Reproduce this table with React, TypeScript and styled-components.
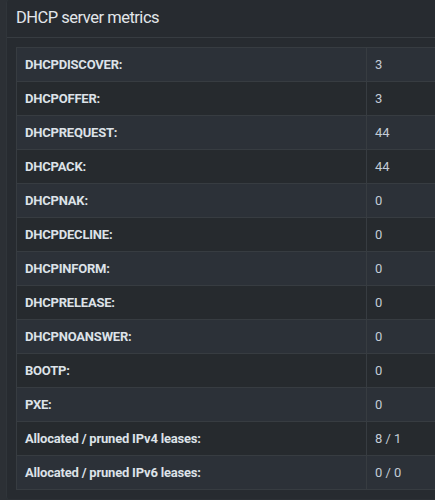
import React from "react";
import styled, { createGlobalStyle } from "styled-components";

const Global = createGlobalStyle`
  html, body {
    margin: 0;
    padding: 0;
    background: #2c3035;
    overflow: hidden;
  }
  body {
    font-family: Roboto, "Liberation Sans", sans-serif;
  }
`;

const Page = styled.div`
  padding: 0 0 0 6px;
  width: 480px;
`;

const Card = styled.section`
  background: #272b30;
  border-radius: 3px 0 0 3px;
  border-left: 1px solid #30353a;
`;

const Header = styled.header`
  height: 37px;
  display: flex;
  align-items: center;
  padding: 0 9px;
  border-bottom: 1px solid #373c41;
  box-sizing: content-box;
`;

const Title = styled.h3`
  margin: 0;
  font-family: Roboto, sans-serif;
  font-weight: 400;
  font-size: 16.5px;
  color: #e2e6ea;
  letter-spacing: -0.5px;
  transform: translateY(-1px);
`;

const Body = styled.div`
  padding: 9px 0 9px 9px;
`;

const Table = styled.table`
  border-collapse: collapse;
  width: 100%;
  border: 1px solid #373c41;
`;

const Row = styled.tr<{ $odd: boolean }>`
  background: ${(p) => (p.$odd ? "#2c3138" : "#262a2e")};
  height: 34px;
`;

const Label = styled.td`
  width: 333px;
  padding: 0 8px;
  border: 1px solid #373c41;
  font-family: Roboto, sans-serif;
  font-weight: 700;
  font-size: 13px;
  color: #dde2e8;
  letter-spacing: -0.2px;
`;

const Value = styled.td`
  padding: 0 8px;
  border: 1px solid #373c41;
  font-family: Roboto, sans-serif;
  font-size: 13px;
  color: #c3ccd6;
`;

const rows: [string, string][] = [
  ["DHCPDISCOVER:", "3"],
  ["DHCPOFFER:", "3"],
  ["DHCPREQUEST:", "44"],
  ["DHCPACK:", "44"],
  ["DHCPNAK:", "0"],
  ["DHCPDECLINE:", "0"],
  ["DHCPINFORM:", "0"],
  ["DHCPRELEASE:", "0"],
  ["DHCPNOANSWER:", "0"],
  ["BOOTP:", "0"],
  ["PXE:", "0"],
  ["Allocated / pruned IPv4 leases:", "8 / 1"],
  ["Allocated / pruned IPv6 leases:", "0 / 0"],
];

export default function App() {
  return (
    <Page>
      <Global />
      <Card>
        <Header>
          <Title>DHCP server metrics</Title>
        </Header>
        <Body>
          <Table>
            <tbody>
              {rows.map(([k, v], i) => (
                <Row key={k} $odd={i % 2 === 0}>
                  <Label>{k}</Label>
                  <Value>{v}</Value>
                </Row>
              ))}
            </tbody>
          </Table>
        </Body>
      </Card>
    </Page>
  );
}
